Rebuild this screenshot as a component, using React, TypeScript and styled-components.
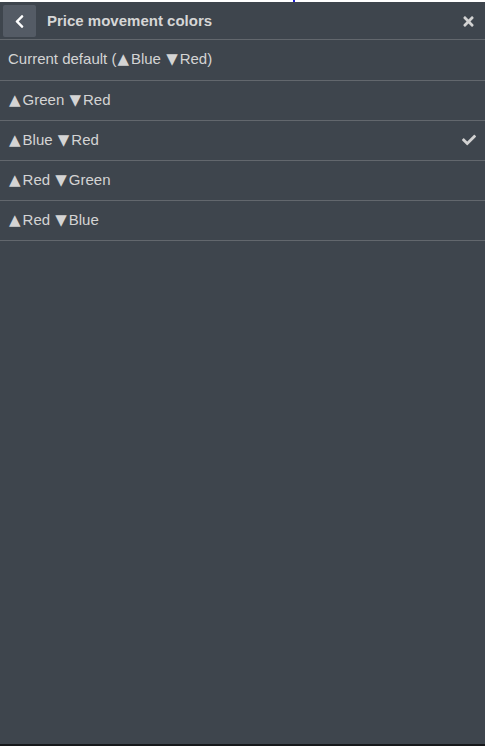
import React from "react";
import styled, { createGlobalStyle } from "styled-components";
import { FaChevronLeft, FaTimes, FaCheck } from "react-icons/fa";

const Global = createGlobalStyle`
  html, body { margin: 0; padding: 0; background: #ffffff; }
  body { font-family: "Liberation Sans", Arial, sans-serif; }
`;

const Page = styled.div`
  display: flex;
  flex-direction: column;
  height: 746px;
  overflow: hidden;
`;

const TopStrip = styled.div`
  height: 2px;
  background: #ffffff;
  display: flex;
`;

const Dot = styled.span`
  width: 2px;
  height: 2px;
  margin-left: 293px;
  background: #2020d0;
`;

const Panel = styled.div`
  flex: 1;
  background: #3e454d;
  display: flex;
  flex-direction: column;
`;

const Header = styled.div`
  height: 37px;
  display: flex;
  align-items: center;
  padding: 0 10px 0 3px;
  border-bottom: 1px solid #62676d;
`;

const BackButton = styled.button`
  width: 33px;
  height: 32px;
  border: none;
  border-radius: 2px;
  background: #545b65;
  color: #ffffff;
  display: flex;
  align-items: center;
  justify-content: center;
  padding: 0;
  margin-top: 1px;
  font-size: 15px;
`;

const Title = styled.div`
  flex: 1;
  margin-left: 11px;
  font-size: 15px;
  font-weight: bold;
  color: #d6d6d6;
`;

const CloseButton = styled.span`
  color: #d2d2d2;
  font-size: 15px;
  display: flex;
  align-items: center;
  margin-top: 1px;
  margin-right: -1px;
`;

const List = styled.div`
  display: flex;
  flex-direction: column;
`;

const Row = styled.div`
  height: 37px;
  display: flex;
  align-items: center;
  padding: 0 8px 2px 8px;
  border-bottom: 1px solid #62676d;
  &:first-child { height: 38px; }
  font-size: 15px;
  color: #d4d4d4;
`;

const Label = styled.span`
  flex: 1;
`;

const Tri = styled.span`
  font-family: "DejaVu Sans", sans-serif;
  font-size: 15px;
  margin: 0 2px 0 1px;
`;

const Check = styled.span`
  color: #d2d2d2;
  font-size: 14px;
  display: flex;
  margin-right: 1px;
  margin-top: 1px;
`;

const BottomStrip = styled.div`
  height: 2px;
  background: #16181a;
`;

type Item = { pre?: string; up: string; down: string; post?: string; selected?: boolean };

const items: Item[] = [
  { pre: "Current default (", up: "Blue ", down: "Red", post: ")" },
  { up: "Green ", down: "Red" },
  { up: "Blue ", down: "Red", selected: true },
  { up: "Red ", down: "Green" },
  { up: "Red ", down: "Blue" },
];

export default function App() {
  return (
    <>
      <Global />
      <Page>
        <TopStrip>
          <Dot />
        </TopStrip>
        <Panel>
          <Header>
            <BackButton aria-label="Back">
              <FaChevronLeft />
            </BackButton>
            <Title>Price movement colors</Title>
            <CloseButton>
              <FaTimes />
            </CloseButton>
          </Header>
          <List>
            {items.map((it, i) => (
              <Row key={i}>
                <Label>
                  {it.pre}
                  <Tri>▲</Tri>
                  {it.up}
                  <Tri>▼</Tri>
                  {it.down}
                  {it.post}
                </Label>
                {it.selected && (
                  <Check>
                    <FaCheck />
                  </Check>
                )}
              </Row>
            ))}
          </List>
        </Panel>
        <BottomStrip />
      </Page>
    </>
  );
}
